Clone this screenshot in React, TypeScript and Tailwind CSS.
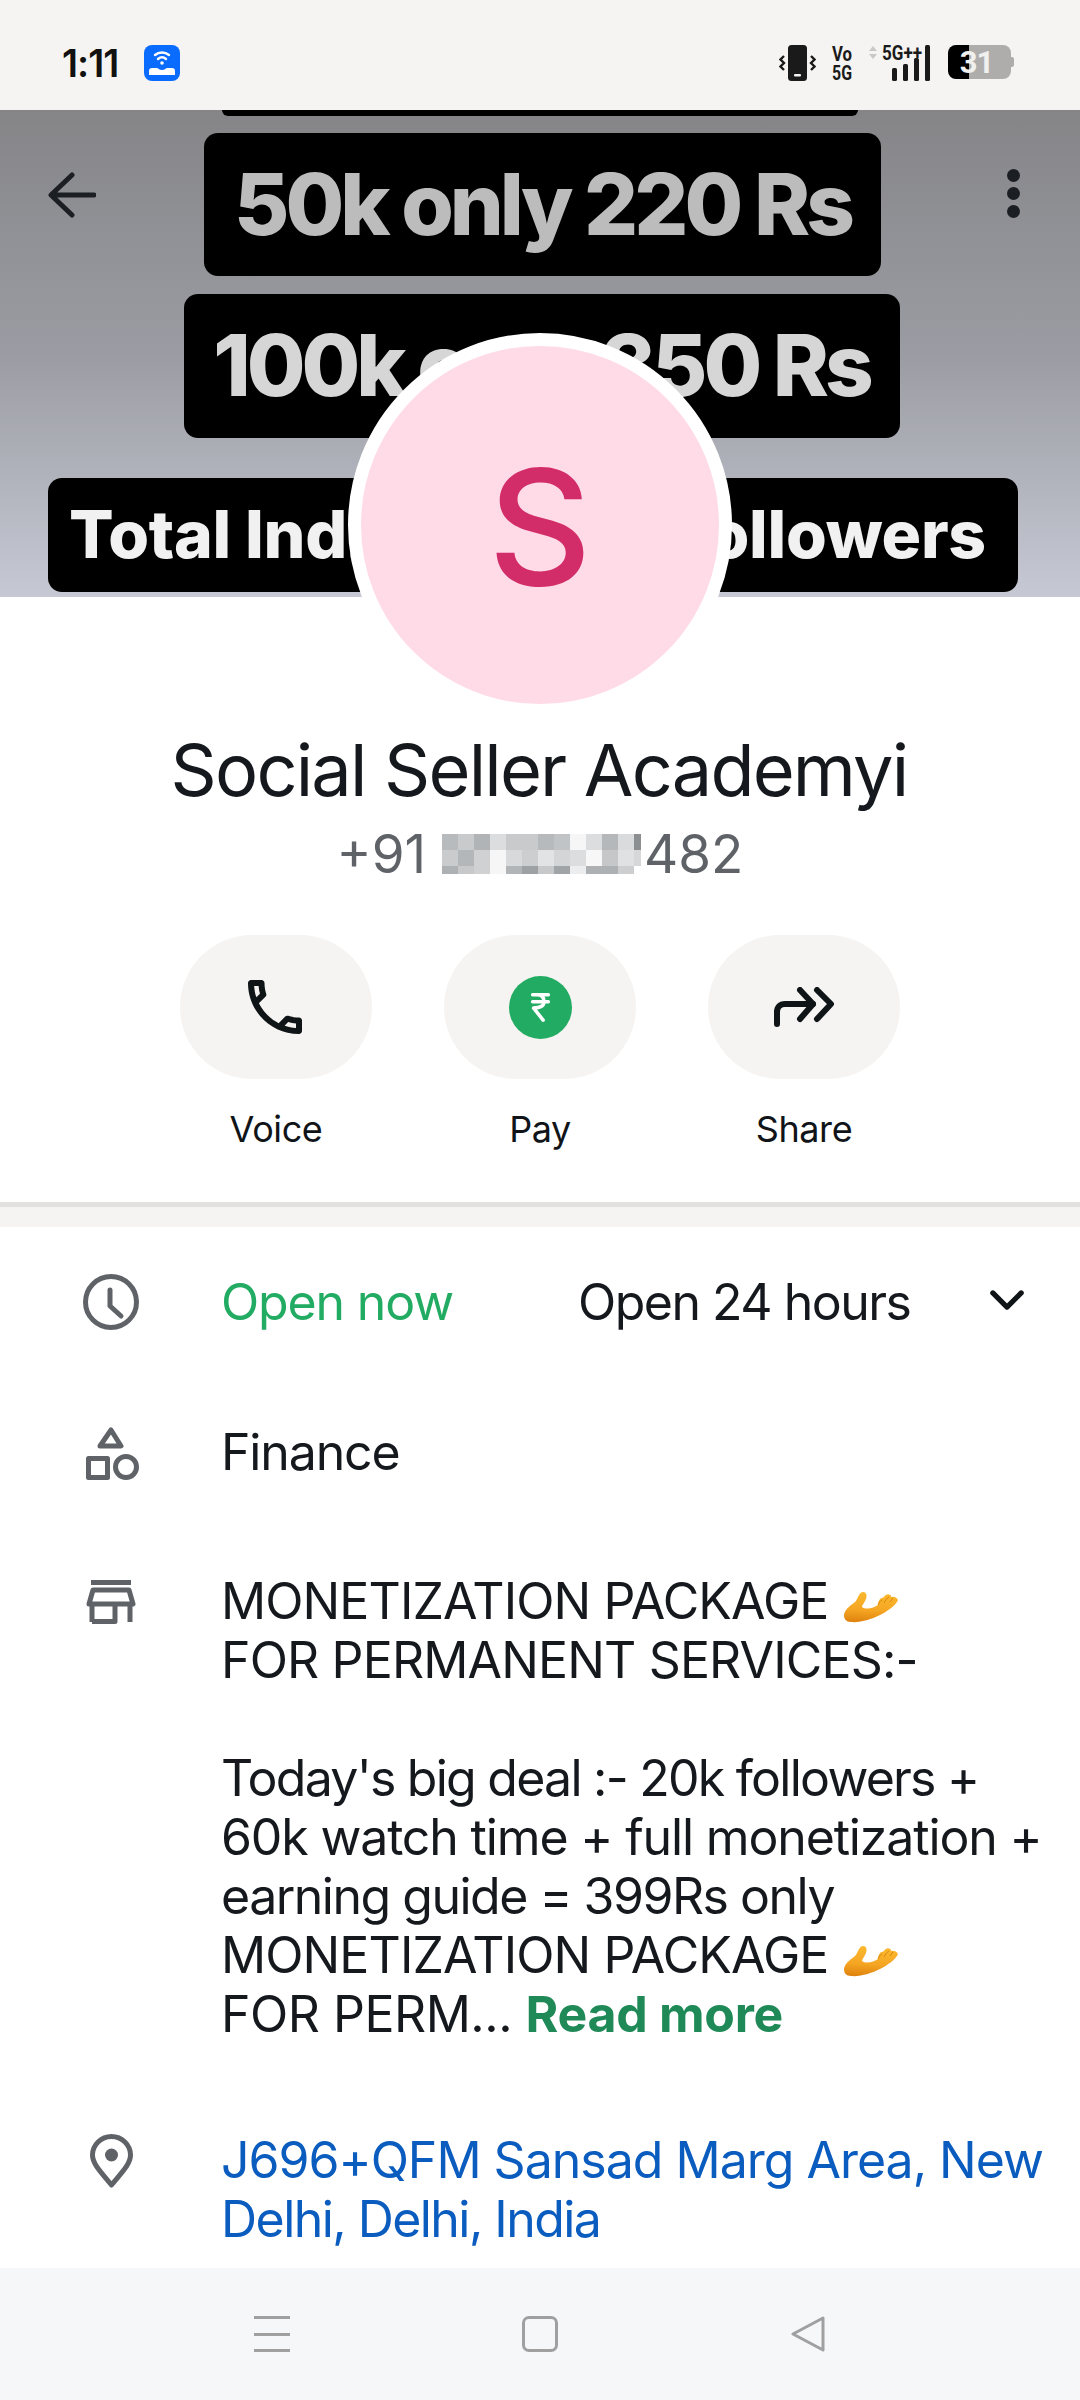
import * as React from "react";

/* pixelated part of the phone number */
const BLUR_ROWS = [
  ["#b8bbbd", "#c8cacb", "#b1b4b6", "#dcdddf", "#c8cacc", "#c8cacc", "#b7babc", "#c1c4c6", "#f6f6f7", "#dcdddf", "#b5b8ba", "#dadbdd"],
  ["#c9cbcd", "#b4b7b9", "#cfd1d3", "#f6f6f7", "#d8d9db", "#ccced0", "#e2e3e5", "#d3d5d6", "#dcdddf", "#f7f7f8", "#c5c7c9", "#e0e1e3"],
  ["#aeb1b3", "#c6c8ca", "#cfd1d3", "#f6f6f7", "#b2b5b7", "#9ea1a4", "#c6c8ca", "#a1a4a7", "#ecedee", "#aeb1b3", "#aeb1b3", "#cccecf"],
];

function BlurredDigits() {
  return (
    <span className="inline-flex h-[40px] w-[199px] flex-col overflow-hidden">
      {BLUR_ROWS.map((row, r) => (
        <span key={r} className="flex h-[16px] shrink-0">
          {row.map((c, i) => (
            <span key={i} className="h-full w-[16px] shrink-0" style={{ background: c }} />
          ))}
          <span className={r === 0 ? "h-full w-[7px] bg-[#8b8f92]" : r === 1 ? "h-full w-[7px] bg-[#d5d7d8]" : "h-full w-[7px]"} />
        </span>
      ))}
    </span>
  );
}

function PalmUp({ className }: { className?: string }) {
  return (
    <svg viewBox="0 0 54 32" className={className} aria-hidden="true">
      <defs>
        <linearGradient id="palm" x1="0.55" y1="0" x2="0.45" y2="1">
          <stop offset="0" stopColor="#fbb92f" />
          <stop offset="0.6" stopColor="#f5a623" />
          <stop offset="1" stopColor="#e0840f" />
        </linearGradient>
      </defs>
      <path
        d="M0 24C1 17 8 14 12 10 14 6 16 1 19 1c4 0 4 4 3 7-1 3-4 6-4 8 4 3 12 1 16-2 0-4 3-8 5-7 1-2 5-5 7-3 1 0 1 1 1 2 2-1 6 0 7 3-2 5-10 11-18 15C28 28 16 32 7 31 2 31 0 28 0 24z"
        fill="url(#palm)"
      />
      <path d="M34 14c1-2 2-4 4-5M40 12c1-2 2-4 5-6M46 11c1-1 2-3 3-4" stroke="#d98610" strokeWidth="1" fill="none" />
    </svg>
  );
}

function StatusBar() {
  return (
    <div className="flex h-[110px] items-start justify-between bg-[#f5f4f2] pt-[45px] pl-[62px] pr-[66px]">
      <div className="flex items-center gap-[26px]">
        <span className="text-[38px] leading-[36px] font-semibold tracking-[-1px] text-[#111]">1:11</span>
        <span className="flex h-[36px] w-[36px] items-center justify-center rounded-[8px] bg-[#0a6cff]">
          <svg viewBox="0 0 36 36" className="h-[36px] w-[36px]" fill="none" stroke="#fff" strokeWidth="2.4" strokeLinecap="round">
            <path d="M11 10c4-3.4 10-3.4 14 0" />
            <path d="M14 14c2.4-2 5.6-2 8 0" />
            <circle cx="18" cy="18" r="1.8" fill="#fff" stroke="none" />
            <path d="M5 30v-4c0-2 1-3 3-3h5c1 0 2 2 5 2s4-2 5-2h5c2 0 3 1 3 3v4z" fill="#fff" stroke="none" />
          </svg>
        </span>
      </div>
      <div className="flex items-start">
        <svg viewBox="0 0 37 36" className="h-[36px] w-[37px]" aria-hidden="true">
          <rect x="9" y="0" width="19" height="36" rx="3.5" fill="#1a1a1a" />
          <rect x="15" y="29" width="7" height="2.4" rx="1" fill="#f5f4f2" />
          <path d="M5 11 1.500 14.500 5 18l-3.500 3.500L5 25M32 11l3.500 3.500L32 18l3.500 3.500L32 25" fill="none" stroke="#1a1a1a" strokeWidth="2.400" />
        </svg>
        <svg viewBox="0 0 20 36" className="ml-[16px] h-[36px] w-[20px] overflow-visible" aria-hidden="true">
          <text x="0" y="16" fontFamily="Roboto" fontWeight="700" fontSize="21" textLength="20" lengthAdjust="spacingAndGlyphs" fill="#1a1a1a">Vo</text>
          <text x="0" y="35" fontFamily="Roboto" fontWeight="700" fontSize="21" textLength="20" lengthAdjust="spacingAndGlyphs" fill="#1a1a1a">5G</text>
        </svg>
        <svg viewBox="0 0 62 36" className="ml-[17px] h-[36px] w-[62px] overflow-visible" aria-hidden="true">
          <path d="M0 6 4 1l4 5zM0 9l4 5 4-5z" fill="#c9c8c6" />
          <text x="13" y="15" fontFamily="Roboto" fontWeight="700" fontSize="20" textLength="40" lengthAdjust="spacingAndGlyphs" fill="#1a1a1a">5G++</text>
          <rect x="23" y="23" width="5" height="13" rx="1.5" fill="#1a1a1a" />
          <rect x="34" y="19" width="5" height="17" rx="1.5" fill="#1a1a1a" />
          <rect x="45" y="13" width="5" height="23" rx="1.5" fill="#1a1a1a" />
          <rect x="56" y="0" width="5" height="36" rx="1.500" fill="#1a1a1a" />
        </svg>
        <span className="ml-[17px] flex h-[34px] w-[63px] items-center justify-center rounded-[8px] bg-[linear-gradient(90deg,#000_33%,#aeadac_33%)] pr-[6px] text-[31px] leading-none font-bold tracking-[-1px] text-[#f0f0ef] [font-family:Roboto,sans-serif]">
          31
        </span>
        <span className="mt-[12px] h-[10px] w-[3px] rounded-r-[2px] bg-[#aeadac]" />
      </div>
    </div>
  );
}

function Banner() {
  return (
    <div className="relative flex h-[487px] flex-col items-center bg-[linear-gradient(180deg,#858588_0%,#9b9ca3_50%,#c6c9d4_100%)] font-extrabold">
      <div className="h-[6px] w-[636px] rounded-b-[12px] bg-black" />
      <div className="mt-[17px] ml-[5px] flex h-[143px] w-[677px] items-center justify-center rounded-[14px] bg-black text-[85px] tracking-[-4px] text-[#bcbcbc]">
        50k only 220 Rs
      </div>
      <div className="mt-[18px] ml-[3px] flex h-[144px] w-[716px] items-center justify-center rounded-[14px] bg-black text-[85px] tracking-[-4px] text-[#d6d6d6]">
        100k only 350 Rs
      </div>
      <div className="mt-[40px] mr-[14px] flex h-[114px] w-[970px] items-center rounded-[14px] bg-black pb-[2px] pl-[21px] text-[66px] tracking-[-0.3px] whitespace-nowrap text-[#f1f1f1]">
        Total Indian Active followers
      </div>

      {/* back + overflow menu float on the cover */}
      <svg viewBox="0 0 48 46" className="absolute top-[62px] left-[48px] h-[46px] w-[48px]" fill="none" stroke="#1b1f24" strokeWidth="5" strokeLinecap="round" strokeLinejoin="round">
        <path d="M46 23H4M24 3 3 23l21 20" />
      </svg>
      <div className="absolute top-[59px] left-[1007px] flex flex-col gap-[5px]">
        <span className="h-[13px] w-[13px] rounded-full bg-[#1b1f24]" />
        <span className="h-[13px] w-[13px] rounded-full bg-[#1b1f24]" />
        <span className="h-[13px] w-[13px] rounded-full bg-[#1b1f24]" />
      </div>

      <div className="absolute top-[223px] left-[348px] flex h-[384px] w-[384px] items-center justify-center rounded-full border-[13px] border-white bg-[#fedbe7] pt-[4px] text-[160px] leading-none font-medium tracking-normal text-[#d32d69]">
        S
      </div>
    </div>
  );
}

function ActionButton({ label, children }: { label: string; children: React.ReactNode }) {
  return (
    <div className="flex w-[192px] flex-col items-center">
      <div className="flex h-[144px] w-[192px] items-center justify-center rounded-full bg-[#f5f4f2]">{children}</div>
      <span className="mt-[28px] text-[36px] leading-[44px] tracking-[-0.4px] text-[#101418]">{label}</span>
    </div>
  );
}

function Profile() {
  return (
    <div className="flex flex-col items-center bg-white">
      <h1 className="mt-[126px] pr-[2px] text-[72px] leading-[94px] font-normal tracking-[-1.8px] text-[#15191d]">Social Seller Academyi</h1>
      <div className="mt-[7px] flex h-[60px] items-center text-[53px] leading-[60px] text-[#5f6368]">
        <span className="mr-[16px]">+91</span>
        <BlurredDigits />
        <span className="ml-[3px]">482</span>
      </div>
      <div className="mt-[51px] flex gap-[72px] pb-[51px]">
        <ActionButton label="Voice">
          <svg viewBox="3 3 18 18" className="mr-[2px] h-[54px] w-[54px]" fill="#0f1417">
            <path d="M6.54 5c.06.89.21 1.76.45 2.59l-1.2 1.2c-.41-1.2-.67-2.47-.76-3.79h1.51m9.86 12.02c.85.24 1.72.39 2.6.45v1.49c-1.32-.09-2.59-.35-3.8-.75l1.2-1.19M7.5 3H4c-.55 0-1 .45-1 1 0 9.39 7.61 17 17 17 .55 0 1-.45 1-1v-3.49c0-.55-.45-1-1-1-1.24 0-2.45-.2-3.57-.57-.1-.04-.21-.05-.31-.05-.26 0-.51.1-.71.29l-2.2 2.2c-2.83-1.45-5.15-3.76-6.59-6.59l2.2-2.2c.28-.28.36-.67.25-1.02C8.7 6.45 8.5 5.25 8.5 4c0-.55-.45-1-1-1z" />
          </svg>
        </ActionButton>
        <ActionButton label="Pay">
          <span className="flex h-[63px] w-[63px] items-center justify-center rounded-full bg-[#22ab62]">
            <svg viewBox="0 0 24 34" className="h-[30px] w-[21px]" fill="none" stroke="#fff" strokeWidth="4" strokeLinecap="round" strokeLinejoin="round">
              <path d="M3 3h18M3 11h18M8 3c6 0 8 3 8 8s-4 7-12 7l11 14" />
            </svg>
          </span>
        </ActionButton>
        <ActionButton label="Share">
          <svg viewBox="0 0 60 40" className="h-[40px] w-[60px]" fill="none" stroke="#0f1417" strokeWidth="6" strokeLinecap="round" strokeLinejoin="round">
            <path d="M3 37V25c0-5 3-8 8-8h28" />
            <path d="M26 3l13 14-13 15M43 3l14 14-14 15" />
          </svg>
        </ActionButton>
      </div>
    </div>
  );
}

function Details() {
  return (
    <div className="flex-1 bg-white pt-[46px] text-[50px] leading-[59px] tracking-[-1.15px] text-[#15191d]">
      <div className="flex">
        <div className="w-[221px] shrink-0 pl-[83px] pt-[1px]">
          <svg viewBox="0 0 56 56" className="h-[56px] w-[56px]" fill="none" stroke="#5f6368" strokeWidth="5" strokeLinecap="round" strokeLinejoin="round">
            <circle cx="28" cy="28" r="25.500" />
            <path d="M27 16v16l11 10" />
          </svg>
        </div>
        <span className="text-[#22ab62]">Open now</span>
        <span className="ml-[125px] tracking-[-1.5px]">Open 24 hours</span>
        <svg viewBox="0 0 36 22" className="mt-[17px] ml-[80px] h-[21px] w-[34px]" fill="none" stroke="#0f1417" strokeWidth="5.500" strokeLinecap="round" strokeLinejoin="round">
          <path d="M3 3l15 15L33 3" />
        </svg>
      </div>

      <div className="mt-[91px] flex">
        <div className="w-[221px] shrink-0 pl-[86px] pt-[4px]">
          <svg viewBox="0 0 53 53" className="h-[53px] w-[53px]" fill="none" stroke="#5f6368" strokeWidth="5" strokeLinejoin="round">
            <path d="M25 3 35 19H14z" />
            <rect x="2.500" y="31.500" width="19" height="19" />
            <circle cx="40" cy="40" r="10.500" />
          </svg>
        </div>
        <span>Finance</span>
      </div>

      <div className="mt-[90px] flex">
        <div className="w-[221px] shrink-0 pl-[86px] pt-[8px]">
          <svg viewBox="0 0 50 44" className="h-[44px] w-[50px]" fill="none" stroke="#5f6368" strokeWidth="5" strokeLinejoin="round">
            <path d="M5 2.500h40" />
            <path d="M7 10h36l4 14H3z" />
            <path d="M6 24v18M44 24v18M6 41.500h23V26" />
          </svg>
        </div>
        <p className="whitespace-nowrap">
          <span className="tracking-[-0.9px]">MONETIZATION PACKAGE </span>
          <PalmUp className="ml-[2px] inline-block h-[32px] w-[54px] align-[-4px]" />
          <br />
          <span className="tracking-[-0.85px]">FOR PERMANENT SERVICES:-</span>
          <br />
          <br />
          <span className="tracking-[-1.75px]">Today's big deal :- 20k followers +</span>
          <br />
          60k watch time + full monetization +
          <br />
          <span className="tracking-[-1.5px]">earning guide = 399Rs only</span>
          <br />
          <span className="tracking-[-0.9px]">MONETIZATION PACKAGE </span>
          <PalmUp className="ml-[2px] inline-block h-[32px] w-[54px] align-[-4px]" />
          <br />
          <span className="tracking-[-0.5px]">FOR PERM... </span>
          <span className="font-bold tracking-[-0.3px] text-[#1f8a57]">Read more</span>
        </p>
      </div>

      <div className="mt-[87px] flex">
        <div className="w-[221px] shrink-0 pl-[90px] pt-[3px]">
          <svg viewBox="0 0 43 54" className="h-[54px] w-[43px]" fill="none" stroke="#5f6368" strokeWidth="5" strokeLinejoin="round">
            <path d="M21.500 51C11 38 2.500 30 2.500 21a19 18.500 0 0 1 38 0c0 9-8.500 17-19 30z" />
            <circle cx="21.500" cy="21" r="6.500" fill="#5f6368" stroke="none" />
          </svg>
        </div>
        <p className="whitespace-nowrap text-[#0b5cbf]">
          <span className="tracking-[-1px]">J696+QFM Sansad Marg Area, New</span>
          <br />
          <span className="tracking-[-1.55px]">Delhi, Delhi, India</span>
        </p>
      </div>
    </div>
  );
}

function NavBar() {
  return (
    <div className="flex h-[132px] items-start justify-center gap-[232px] bg-[#f6f7f9] pt-[48px]">
      <div className="flex h-[36px] w-[36px] flex-col justify-between">
        <span className="h-[3px] bg-[#a0a0a0]" />
        <span className="h-[3px] bg-[#a0a0a0]" />
        <span className="h-[3px] bg-[#a0a0a0]" />
      </div>
      <div className="h-[36px] w-[36px] rounded-[7px] border-[3px] border-[#a0a0a0]" />
      <svg viewBox="0 0 36 36" className="h-[36px] w-[36px]" fill="none" stroke="#a0a0a0" strokeWidth="3" strokeLinejoin="round">
        <path d="M33 2 3 18l30 16z" />
      </svg>
    </div>
  );
}

export default function App() {
  return (
    <div className="flex h-[2400px] w-[1080px] flex-col overflow-hidden bg-white [font-family:Inter,sans-serif]">
      <StatusBar />
      <Banner />
      <Profile />
      {/* section divider */}
      <div className="h-[25px] border-t-[5px] border-[#e2e1df] bg-[#f5f4f2]" />
      <Details />
      <NavBar />
    </div>
  );
}
